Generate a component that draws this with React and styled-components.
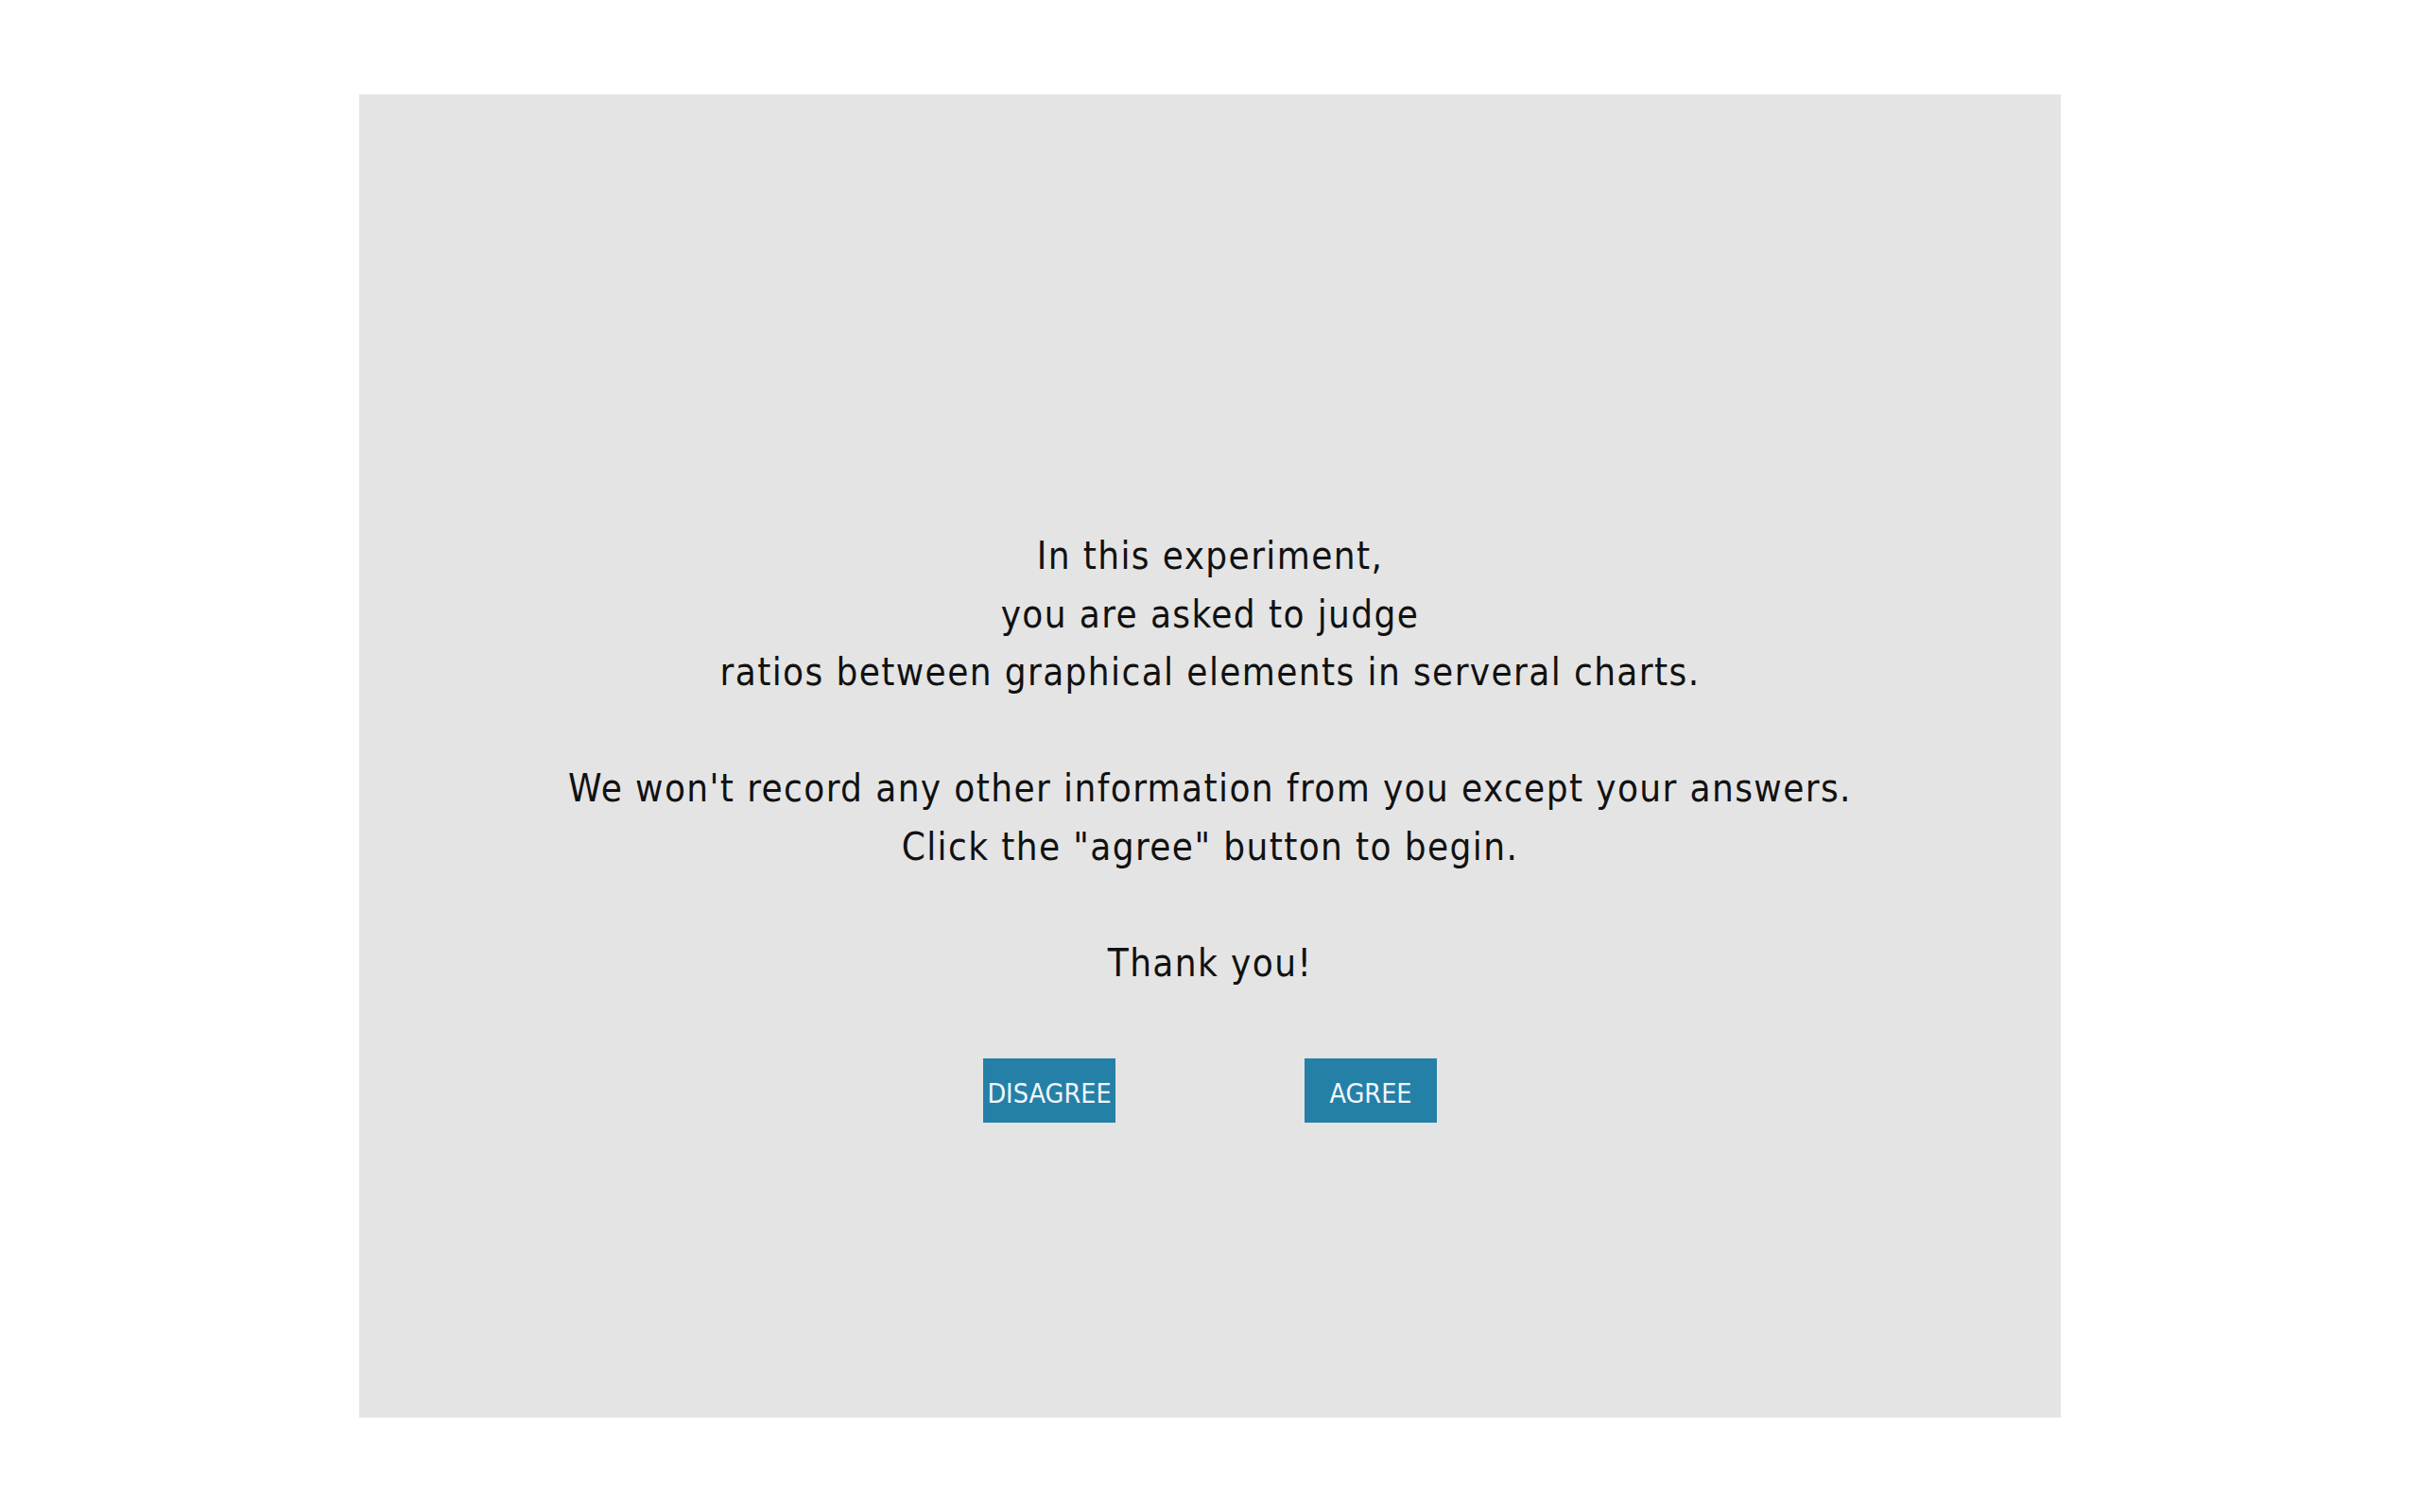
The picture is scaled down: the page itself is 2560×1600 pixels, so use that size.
import React from 'react'
import styled, { createGlobalStyle } from 'styled-components';

const GlobalStyle = createGlobalStyle`
body {
    margin: 0;
    background-color: #FFFFFF;
    font-family: "DejaVu Sans Condensed", "DejaVu Sans", sans-serif;
}
`;

const StyledPage = styled.div`
    width: 100%;
    padding-top: 100px;
    box-sizing: border-box;
`;

const StyledPanel = styled.div`
    width: 1800px;
    height: 1400px;
    margin: 0 auto;
    background-color: #e4e4e4;
    box-sizing: border-box;
    padding-top: 458px;
    display: flex;
    flex-direction: column;
    align-items: center;
`;

const StyledText = styled.p`
    margin: 0;
    text-align: center;
    color: #111111;
    font-size: 40px;
    line-height: 61.5px;
    letter-spacing: 1.4px;
`;

const StyledButtonRow = styled.div`
    display: flex;
    justify-content: center;
    gap: 200px;
    margin-top: 70px;
`;

const StyledButton = styled.button`
    width: 140px;
    height: 68px;
    padding: 6px 0 0;
    border: 0;
    background-color: #2580a8;
    color: #f2f7fa;
    font-family: inherit;
    font-size: 28.5px;
    cursor: pointer;
`;

const App = () => {
    const handleClick = (choice) => {
        console.log(choice);
    }

    return (
        <StyledPage>
            <GlobalStyle />
            <StyledPanel>
                <StyledText>
                    In this experiment,<br />
                    you are asked to judge<br />
                    ratios between graphical elements in serveral charts.<br />
                    <br />
                    We won't record any other information from you except your answers.<br />
                    Click the "agree" button to begin.<br />
                    <br />
                    Thank you!
                </StyledText>
                <StyledButtonRow>
                    <StyledButton onClick={() => handleClick('disagree')}>DISAGREE</StyledButton>
                    <StyledButton onClick={() => handleClick('agree')}>AGREE</StyledButton>
                </StyledButtonRow>
            </StyledPanel>
        </StyledPage>
    )
}

export default App
